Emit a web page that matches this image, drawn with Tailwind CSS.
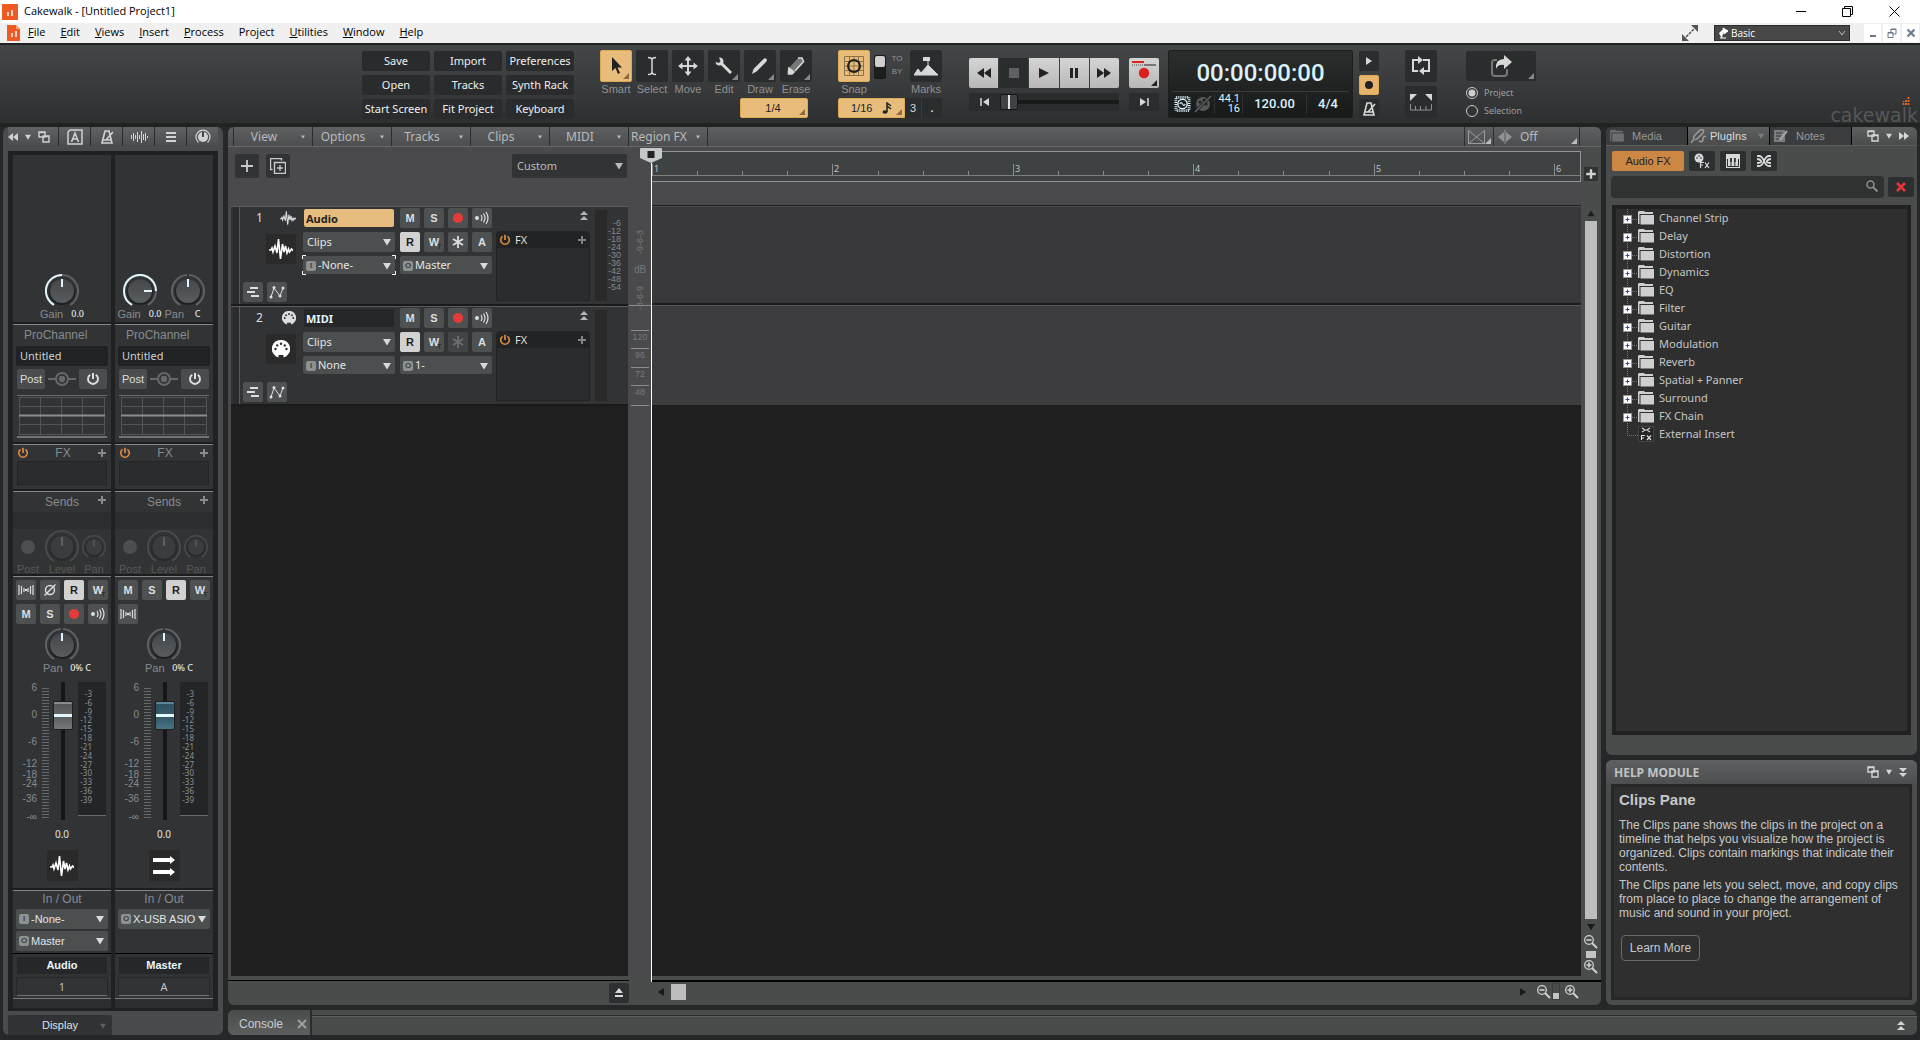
<!DOCTYPE html>
<html lang="en">
<head>
<meta charset="utf-8">
<meta name="viewport" content="width=device-width, initial-scale=1">
<title>Cakewalk - [Untitled Project1]</title>
<script src="https://cdn.jsdelivr.net/npm/@tailwindcss/browser@4"></script>
</head>
<body class="flex h-screen min-h-[1000px] flex-col overflow-x-hidden bg-[#262728] font-['Noto_Sans',sans-serif] text-[11px] text-[#c8cacb]">

<svg class="absolute h-0 w-0" aria-hidden="true">
  <symbol id="i-float" viewBox="0 0 12 12"><path d="M1 1h6v5H1zM5 5h6v6H5z" fill="#4d4f50" stroke="currentColor" stroke-width="1.4"/><path d="M1 1.600h6M5 5.600h6" stroke="currentColor" stroke-width="1.400"/></symbol>
  <symbol id="i-down" viewBox="0 0 8 8"><path d="M0 1h8L4 7.500z" fill="currentColor"/></symbol>
  <symbol id="i-corner" viewBox="0 0 6 6"><path d="M6 0v6H0z" fill="currentColor"/></symbol>
  <symbol id="i-metro" viewBox="0 0 16 16"><path d="M6 2h4l3 12H3zM4 11h8M7 11l7-8" fill="none" stroke="currentColor" stroke-width="1.600"/></symbol>
  <symbol id="i-waves" viewBox="0 0 18 16"><path d="M1.500 6v4M3.500 4v8M5.500 6v4M7.500 3v10M9.500 6v4M11.500 2v12M13.500 5v6M15.500 4v8M17.500 7v2" stroke="currentColor" stroke-width="1"/></symbol>
  <symbol id="i-power" viewBox="0 0 14 14"><path d="M4.200 2.800a5 5 0 1 0 5.600 0" fill="none" stroke="currentColor" stroke-width="1.900"/><path d="M7 1v6" stroke="currentColor" stroke-width="2"/></symbol>
  <symbol id="i-plus" viewBox="0 0 10 10"><path d="M5 1v8M1 5h8" stroke="currentColor" stroke-width="2"/></symbol>
  <symbol id="i-audio" viewBox="0 0 24 24"><path d="M0 13h2l1-2 1 4 2-6 2 7 1.500-14 2 20 2-15 1.500 8 1.500-6 1.500 7 1.500-4 1 3 2-3 2 2" fill="none" stroke="currentColor" stroke-width="1.600"/></symbol>
  <symbol id="i-midi" viewBox="0 0 18 18"><path d="M9 0a8.800 8.800 0 0 0-6 15.500c1 1 2 1.500 3.500 2V15h5v2.500c1.500-.5 2.500-1 3.500-2A8.800 8.800 0 0 0 9 0z" fill="currentColor"/><g fill="#2c2c2c"><circle cx="3.500" cy="9" r="1.200"/><circle cx="5.200" cy="5.400" r="1.200"/><circle cx="9" cy="3.800" r="1.200"/><circle cx="12.800" cy="5.400" r="1.200"/><circle cx="14.500" cy="9" r="1.200"/></g></symbol>
  <symbol id="i-echo" viewBox="0 0 16 16"><circle cx="3" cy="8" r="2" fill="currentColor"/><path d="M7 5q2 3 0 6M9.500 3.500q3 4.500 0 9M12 2q4 6 0 12" fill="none" stroke="currentColor" stroke-width="1.200"/></symbol>
  <symbol id="i-inter" viewBox="0 0 16 12"><path d="M1 1v10M3.500 2v8M6 4v4M10 4v4M12.500 2v8M15 1v10" stroke="currentColor" stroke-width="1.200"/><path d="M7 6h2" stroke="currentColor" stroke-width="2"/></symbol>
  <symbol id="i-phase" viewBox="0 0 14 14"><circle cx="7" cy="7" r="4.500" fill="none" stroke="currentColor" stroke-width="1.400"/><path d="M1.500 12.500l11-11" stroke="currentColor" stroke-width="1.400"/></symbol>
  <symbol id="i-node" viewBox="0 0 28 14"><path d="M0 7h28" stroke="currentColor" stroke-width="2"/><circle cx="14" cy="7" r="6" fill="#323335" stroke="currentColor" stroke-width="2"/><circle cx="14" cy="7" r="3.200" fill="currentColor"/></symbol>
  <symbol id="i-takes" viewBox="0 0 14 12"><path d="M4 2h8M1 6h8M5 10h8" stroke="currentColor" stroke-width="2"/></symbol>
  <symbol id="i-auto" viewBox="0 0 16 14"><path d="M2 12L5 3l6 8 3-8" fill="none" stroke="currentColor" stroke-width="1"/><g fill="currentColor"><circle cx="2" cy="12" r="1.500"/><circle cx="5" cy="2.500" r="1.500"/><circle cx="11" cy="11" r="1.500"/><circle cx="14" cy="3" r="1.500"/></g></symbol>
  <symbol id="i-freeze" viewBox="0 0 12 12"><path d="M6 0v12M1 3l10 6M1 9l10-6" stroke="currentColor" stroke-width="1.800"/></symbol>
  <symbol id="i-upup" viewBox="0 0 8 10"><path d="M4 0l4 4H0zM4 5l4 4H0z" fill="currentColor"/></symbol>
  <symbol id="i-zoomout" viewBox="0 0 14 14"><circle cx="5" cy="5" r="4.300" fill="none" stroke="currentColor" stroke-width="1.300"/><path d="M2.500 5h5" stroke="currentColor" stroke-width="1.600"/><path d="M8 8l5 5" stroke="currentColor" stroke-width="2"/></symbol>
  <symbol id="i-zoomin" viewBox="0 0 14 14"><circle cx="5" cy="5" r="4.300" fill="none" stroke="currentColor" stroke-width="1.300"/><path d="M2.500 5h5M5 2.500v5" stroke="currentColor" stroke-width="1.600"/><path d="M8 8l5 5" stroke="currentColor" stroke-width="2"/></symbol>
  <symbol id="i-folder" viewBox="0 0 16 14"><path d="M0 13V1l1-1h5l1 1h8v2H1.500v10z" fill="currentColor"/><path d="M2.500 4H16v9.500H2.500z" fill="currentColor"/></symbol>
  <linearGradient id="cap" x1="0" y1="0" x2="0" y2="1"><stop offset="0" stop-color="#45484b"/><stop offset="1" stop-color="#595c5f"/></linearGradient>
  <symbol id="k-base" viewBox="0 0 34 34"><path d="M9 30.900A16 16 0 1 1 25 30.900" fill="none" stroke="#5f6264" stroke-width="2"/><circle cx="17" cy="18" r="13" fill="#1e1f20"/><circle cx="17" cy="17" r="12" fill="url(#cap)"/></symbol>
  <symbol id="k-dim" viewBox="0 0 34 34"><path d="M9 30.900A16 16 0 1 1 25 30.900" fill="none" stroke="#484a4c" stroke-width="2"/><circle cx="17" cy="18" r="13" fill="#292a2b"/><circle cx="17" cy="17" r="11.500" fill="#3a3c3e"/><path d="M17 7v9" stroke="#5c5f61" stroke-width="2"/></symbol>
  <symbol id="k-half" viewBox="0 0 34 34"><use href="#k-base"/><path d="M9 30.900A16 16 0 0 1 17 1" fill="none" stroke="#e2f4fb" stroke-width="2"/><path d="M17 5v8" stroke="#e2f4fb" stroke-width="2"/></symbol>
  <symbol id="k-full" viewBox="0 0 34 34"><use href="#k-base"/><path d="M9 30.900A16 16 0 1 1 33 17" fill="none" stroke="#e2f4fb" stroke-width="2"/><path d="M21 17h8" stroke="#e2f4fb" stroke-width="2"/></symbol>
  <symbol id="k-pan" viewBox="0 0 34 34"><use href="#k-base"/><path d="M17 0v3" stroke="#323335" stroke-width="2"/><path d="M17 5v8" stroke="#e2f4fb" stroke-width="2"/></symbol>
</svg>

<!-- title bar -->
<header class="flex h-[23px] shrink-0 items-center bg-white pl-0.5 font-['Open_Sans',sans-serif] text-black">
  <svg class="h-4 w-4" viewBox="0 0 16 16"><path d="M0 0h16v16H0z" fill="#ee5a24"/><path d="M5 12V8h2v4zM9 12V6h2v6z" fill="#fbd2bd"/></svg>
  <h1 class="ml-1.5 text-[11px]">Cakewalk - [Untitled Project1]</h1>
  <div class="ml-auto flex items-center gap-9 pr-5">
    <button aria-label="Minimize"><svg class="h-[11px] w-[11px]" viewBox="0 0 11 11"><path d="M1 5.500h10" stroke="#000"/></svg></button>
    <button aria-label="Restore"><svg class="h-[11px] w-[11px]" viewBox="0 0 11 11"><path d="M.5 2.500h8v8h-8zM2.500 2.500v-2h8v8h-2" fill="none" stroke="#000"/></svg></button>
    <button aria-label="Close"><svg class="h-[11px] w-[11px]" viewBox="0 0 11 11"><path d="M.5.500l10 10M10.500.500l-10 10" stroke="#000"/></svg></button>
  </div>
</header>

<!-- menu bar -->
<nav class="flex h-5 shrink-0 items-center bg-[#f0f0f0] pl-[7px] font-['Open_Sans',sans-serif] text-[11px] text-black">
  <svg class="mr-2 h-4 w-[13px]" viewBox="0 0 13 16"><path d="M0 0h9l4 4v12H0z" fill="#ee5a24"/><path d="M9 0v4h4z" fill="#f9a583"/><path d="M4 12V8h2v4zM8 12V6h2v6z" fill="#fbd2bd"/></svg>
  <div class="flex gap-[15px] pb-0.5">
    <a href="#"><u>F</u>ile</a><a href="#"><u>E</u>dit</a><a href="#"><u>V</u>iews</a><a href="#"><u>I</u>nsert</a><a href="#"><u>P</u>rocess</a><a href="#">Project</a><a href="#"><u>U</u>tilities</a><a href="#"><u>W</u>indow</a><a href="#"><u>H</u>elp</a>
  </div>
  <button aria-label="Expand" class="mr-4 ml-auto"><svg class="h-4 w-4" viewBox="0 0 16 16"><path d="M4 12l8-8" stroke="#555" stroke-width="1.500" stroke-dasharray="3 1"/><path d="M9 0h7v7zM0 9v7h7z" fill="#555"/></svg></button>
  <div class="relative mr-3.5">
    <select aria-label="Workspace" class="block h-4 w-[136px] appearance-none border border-[#2c2c2c] bg-[#474747] pl-4 font-['Open_Sans',sans-serif] text-[10px] leading-3 text-white"><option>Basic</option></select>
    <svg class="pointer-events-none absolute top-0.5 left-1 h-3 w-3" viewBox="0 0 12 12"><path d="M2 11h6M4 11L1.500 6 6 2M5 1l5 3-4 3z" fill="#fff" stroke="#fff"/></svg>
    <svg class="pointer-events-none absolute top-1 right-1 h-2 w-2" viewBox="0 0 8 8"><path d="M1 2l3 4 3-4" fill="none" stroke="#bbb"/></svg>
  </div>
  <div class="flex gap-0.5 pr-px text-[#6a7888]">
    <button aria-label="Minimize document" class="flex h-[18px] w-[17px] items-center justify-center bg-white"><svg class="h-2.5 w-2.5" viewBox="0 0 10 10"><path d="M2 8h6" stroke="currentColor" stroke-width="2"/></svg></button>
    <button aria-label="Restore document" class="flex h-[18px] w-[17px] items-center justify-center bg-white"><svg class="h-2.5 w-2.5" viewBox="0 0 10 10"><path d="M1 4.500h5v5H1zM4 4V1h5v5H6M4 1.500h5M1 5h5" fill="none" stroke="currentColor"/></svg></button>
    <button aria-label="Close document" class="flex h-[18px] w-[17px] items-center justify-center bg-white"><svg class="h-2.5 w-2.5" viewBox="0 0 10 10"><path d="M1.500 1.500l7 7M8.500 1.500l-7 7" stroke="currentColor" stroke-width="2"/></svg></button>
  </div>
</nav>

<!-- control bar -->
<section class="relative flex h-[80px] shrink-0 items-start justify-center border-t-2 border-[#1f2423] bg-linear-to-b from-[#444748] to-[#2e2f30] pt-[5px] pr-[22px]">
  <div class="mt-px grid grid-cols-[68px_68px_68px] gap-1" id="shortcuts"></div>

  <div class="ml-[26px] w-[212px]">
    <div class="flex gap-1 text-center font-['Liberation_Sans',sans-serif] text-[11px] leading-[14px] text-[#8f9192]">
      <div class="w-8"><button aria-label="Smart" class="relative mx-auto flex h-8 w-8 items-center justify-center rounded-xs border border-[#dda956] bg-[#e8bd7c] text-[#222]"><svg class="h-5 w-5" viewBox="0 0 20 20"><path d="M6 1v14l3.500-3 2.500 6 2-1-2.500-5.500H16z" fill="currentColor"/></svg><svg class="absolute right-0.5 bottom-0.5 h-1.5 w-1.5 text-[#8a6d3c]"><use href="#i-corner"/></svg></button>Smart</div>
      <div class="w-8"><button aria-label="Select" class="flex h-8 w-8 items-center justify-center rounded-xs bg-[#2a2d2e] text-[#d8d8d8]"><svg class="h-5 w-5" viewBox="0 0 20 20"><path d="M6 1.500q4 0 4 2.500 0-2.500 4-2.500M10 4v12M6 18.500q4 0 4-2.500 0 2.500 4 2.500" fill="none" stroke="currentColor" stroke-width="1.500"/></svg></button>Select</div>
      <div class="w-8"><button aria-label="Move" class="flex h-8 w-8 items-center justify-center rounded-xs bg-[#2a2d2e] text-[#d8d8d8]"><svg class="h-5 w-5" viewBox="0 0 20 20"><path d="M10 3v14M3 10h14" stroke="currentColor" stroke-width="2"/><path d="M10 0l3.500 4.500h-7zM10 20l3.500-4.500h-7zM0 10l4.500-3.500v7zM20 10l-4.500-3.500v7z" fill="currentColor"/></svg></button>Move</div>
      <div class="w-8"><button aria-label="Edit" class="relative flex h-8 w-8 items-center justify-center rounded-xs bg-[#2a2d2e] text-[#d8d8d8]"><svg class="h-5 w-5" viewBox="0 0 20 20"><path d="M7 7l10 10" stroke="currentColor" stroke-width="3"/><path d="M5 1.500a4 4 0 1 1-3.500 4.500L5 7l1.500-2z" fill="currentColor"/></svg><svg class="absolute right-0.5 bottom-0.5 h-1.5 w-1.5 text-[#888]"><use href="#i-corner"/></svg></button>Edit</div>
      <div class="w-8"><button aria-label="Draw" class="relative flex h-8 w-8 items-center justify-center rounded-xs bg-[#2a2d2e] text-[#d8d8d8]"><svg class="h-5 w-5" viewBox="0 0 20 20"><path d="M2 18l1.500-5L13 3.500q2-2 3.300-.7T16 6L6.500 15.500z" fill="currentColor"/></svg><svg class="absolute right-0.5 bottom-0.5 h-1.5 w-1.5 text-[#888]"><use href="#i-corner"/></svg></button>Draw</div>
      <div class="w-8"><button aria-label="Erase" class="relative flex h-8 w-8 items-center justify-center rounded-xs bg-[#2a2d2e] text-[#d8d8d8]"><svg class="h-5 w-5" viewBox="0 0 20 20"><path d="M3 12L12 2h4l1 3-9 11z" fill="#777"/><path d="M3 12l5 4-2 2H2.500v-3zM12 2h4l1.500 3.500L9 15" fill="none" stroke="currentColor" stroke-width="1.600"/><path d="M3 12l5 4-2 2H2.500z" fill="currentColor"/></svg><svg class="absolute right-0.5 bottom-0.5 h-1.5 w-1.5 text-[#888]"><use href="#i-corner"/></svg></button>Erase</div>
    </div>
    <button class="relative mt-0.5 ml-[140px] block h-5 w-[68px] rounded-xs border border-[#dda956] bg-[#e8bd7c] pr-0.5 font-['Liberation_Sans',sans-serif] text-[11px] text-[#222]">1/4<svg class="absolute right-0.5 bottom-0.5 h-1.5 w-1.5 text-[#8a6d3c]"><use href="#i-corner"/></svg></button>
  </div>

  <div class="ml-[26px] w-[104px] font-['Liberation_Sans',sans-serif]">
    <div class="flex text-center text-[11px] leading-[14px] text-[#8f9192]">
      <div class="w-8"><button aria-label="Snap" class="flex h-8 w-8 items-center justify-center rounded-xs border border-[#dda956] bg-[#e8bd7c] text-[#222]"><svg class="h-[22px] w-[22px]" viewBox="0 0 22 22"><path d="M1.500 1.500h19v19h-19zM6.500 1v20M11 1v20M15.500 1v20M1 6.500h20M1 11h20M1 15.500h20" fill="none" stroke="#8d7244"/><circle cx="11" cy="11" r="6" fill="none" stroke="currentColor" stroke-width="2"/></svg></button>Snap</div>
      <button aria-label="Snap to or by" class="mt-[5px] ml-1 flex h-6 w-3 items-start rounded-xs border border-[#191a1a] bg-[#1c1d1d]"><span class="h-[11px] w-full rounded-xs bg-[#cfcfcf]"></span></button>
      <div class="ml-1 w-[14px] pt-0.5 text-[8px] leading-[13px]">TO<br>BY</div>
      <div class="ml-[6px] w-8"><button aria-label="Marks" class="flex h-8 w-8 items-center justify-center rounded-xs bg-[#2a2d2e] text-[#d8d8d8]"><svg class="h-5 w-6" viewBox="0 0 24 20"><path d="M0 19l4-6 3 4 7-8 10 10zM14 9V2" fill="currentColor" stroke="currentColor"/><path d="M9 1h7v4H9z" fill="currentColor"/></svg></button>Marks</div>
    </div>
    <div class="mt-0.5 flex text-[11px]">
      <button class="relative flex h-5 w-[67px] items-center rounded-l-xs border border-[#dda956] bg-[#e8bd7c] pl-3 text-[#222]">1/16<svg class="ml-2.5 h-3 w-2.5" viewBox="0 0 10 12"><ellipse cx="3" cy="10" rx="2.500" ry="1.800" fill="currentColor"/><path d="M5 10V1l4 3M5 4l4 3" stroke="currentColor" stroke-width="1.500" fill="none"/></svg><svg class="absolute right-0.5 bottom-0.5 h-1.5 w-1.5 text-[#8a6d3c]"><use href="#i-corner"/></svg></button>
      <button class="h-5 w-[17px] border-r border-[#3a3c3d] bg-[#2a2d2e] text-[#d8d8d8]">3</button>
      <button class="h-5 w-5 rounded-r-xs bg-[#2a2d2e] font-bold text-[#d8d8d8]">.</button>
    </div>
  </div>

  <div class="mt-2 ml-[27px] grid grid-cols-[150px_30px] gap-x-2.5 gap-y-[5px]">
    <div class="flex h-[30px] gap-px text-[#222]">
      <button aria-label="Rewind" class="flex flex-1 items-center justify-center rounded-l-xs bg-linear-to-b from-[#d4d4d4] to-[#b8b8b8]"><svg class="h-3 w-4" viewBox="0 0 16 12"><path d="M8 1v10L1 6zM15 1v10L8 6z" fill="currentColor"/></svg></button>
      <button aria-label="Stop" class="flex flex-1 items-center justify-center bg-[#2a2d2e]"><span class="h-2.5 w-2.5 bg-[#5e6061]"></span></button>
      <button aria-label="Play" class="flex flex-1 items-center justify-center bg-linear-to-b from-[#d4d4d4] to-[#b8b8b8]"><svg class="h-3 w-3" viewBox="0 0 12 12"><path d="M1 1v10l10-5z" fill="currentColor"/></svg></button>
      <button aria-label="Pause" class="flex flex-1 items-center justify-center bg-linear-to-b from-[#d4d4d4] to-[#b8b8b8]"><svg class="h-3 w-3" viewBox="0 0 12 12"><path d="M2 1h3v10H2zM7 1h3v10H7z" fill="currentColor"/></svg></button>
      <button aria-label="Fast forward" class="flex flex-1 items-center justify-center rounded-r-xs bg-linear-to-b from-[#d4d4d4] to-[#b8b8b8]"><svg class="h-3 w-4" viewBox="0 0 16 12"><path d="M1 1v10l7-5zM8 1v10l7-5z" fill="currentColor"/></svg></button>
    </div>
    <button aria-label="Record" class="relative rounded-xs bg-linear-to-b from-[#d4d4d4] to-[#b8b8b8]"><svg class="h-[30px] w-[30px]" viewBox="0 0 30 30"><path d="M3 4h12" stroke="#d22" stroke-width="2"/><path d="M3 7h12" stroke="#777" stroke-width="1.500" stroke-dasharray="1 1"/><path d="M15 7h12" stroke="#777" stroke-width="2"/><circle cx="15" cy="15" r="5.200" fill="#dc2020"/></svg><svg class="absolute right-0.5 bottom-0.5 h-1.5 w-1.5 text-[#222]"><use href="#i-corner"/></svg></button>
    <div class="flex h-[18px] items-center rounded-xs bg-[#2a2c2d]">
      <button aria-label="Go to start" class="flex w-[31px] shrink-0 justify-center text-[#d8d8d8]"><svg class="h-2.5 w-2.5" viewBox="0 0 10 10"><path d="M1 1v8" stroke="currentColor" stroke-width="1.500"/><path d="M9 1v8L3 5z" fill="currentColor"/></svg></button>
      <input type="range" aria-label="Song position" value="0" class="h-4 w-[119px] shrink-0 appearance-none bg-[linear-gradient(transparent_6px,#191a1a_6px,#191a1a_10px,transparent_10px)] [&::-webkit-slider-thumb]:h-4 [&::-webkit-slider-thumb]:w-[18px] [&::-webkit-slider-thumb]:appearance-none [&::-webkit-slider-thumb]:rounded-xs [&::-webkit-slider-thumb]:border [&::-webkit-slider-thumb]:border-[#161717] [&::-webkit-slider-thumb]:bg-[linear-gradient(90deg,#404244_7px,#dfe6ea_7px,#dfe6ea_9px,#404244_9px)]">
    </div>
    <button aria-label="Go to end" class="flex h-[18px] items-center justify-center rounded-xs bg-[#2a2d2e] text-[#d8d8d8]"><svg class="h-2.5 w-2.5" viewBox="0 0 10 10"><path d="M9 1v8" stroke="currentColor" stroke-width="1.500"/><path d="M1 1v8l6-4z" fill="currentColor"/></svg></button>
  </div>

  <div class="ml-[9px] h-[68px] w-[185px] rounded-xs border border-[#1c1d1d] bg-linear-to-b from-[#2c2d2d] to-[#181919] px-[3px] font-['Roboto',sans-serif] text-[#d9f2fb]">
    <div class="flex h-[41px] items-center justify-center border-b border-[#3a3b3b] pt-1 text-[24px] leading-6 font-medium">00:00:00:00</div>
    <div class="flex h-[24px] items-center text-[12px] leading-[10px] font-medium">
      <svg class="ml-0.5 h-[18px] w-[17px]" viewBox="0 0 18 18"><path d="M2 2h14v14H2z" fill="#1c1d1d" stroke="#d9f2fb" stroke-width="3" stroke-dasharray="1 1"/><circle cx="9" cy="9" r="5" fill="none" stroke="#d9f2fb" stroke-width="1.500"/><path d="M6 9q1.500-3 3 0t3 0" fill="none" stroke="#d9f2fb" stroke-width="1.200"/></svg>
      <svg class="ml-[3px] h-[18px] w-[18px]" viewBox="0 0 18 18"><circle cx="9" cy="9" r="7" fill="#55595a"/><g fill="#222"><circle cx="6" cy="7" r="1.500"/><circle cx="10" cy="5" r="1.500"/><circle cx="12" cy="9" r="1.500"/></g><path d="M1 17L17 1" stroke="#1c1d1d" stroke-width="3"/><path d="M1 17L17 1" stroke="#66696a" stroke-width="1.200"/></svg>
      <span class="ml-0.5 flex h-5 w-[29px] items-center justify-end border-x border-[#303131] pr-0.5 text-right text-[11px] font-normal">44.1<br>16</span>
      <span class="flex h-5 w-16 items-center justify-center border-r border-[#303131] text-[13px]">120.00</span>
      <span class="flex-1 text-center text-[13px]">4/4</span>
    </div>
  </div>

  <div class="mt-px ml-[6px] flex w-5 flex-col gap-1">
    <button aria-label="Play options" class="flex h-5 items-center justify-center rounded-xs bg-[#2a2d2e] text-[#d8d8d8]"><svg class="h-2.5 w-2" viewBox="0 0 8 10"><path d="M1 1v8l6-4z" fill="currentColor"/></svg></button>
    <button aria-label="Audio recording" class="flex h-5 items-center justify-center rounded-xs border border-[#dda956] bg-[#e8b56c]"><span class="h-2 w-2 rounded-full bg-[#222]"></span></button>
    <button aria-label="Metronome" class="flex h-5 items-center justify-center rounded-xs bg-[#2a2d2e] text-[#d8d8d8]"><svg class="h-4 w-4"><use href="#i-metro"/></svg></button>
  </div>

  <div class="ml-[26px] flex w-8 flex-col gap-1">
    <button aria-label="Loop" class="flex h-8 items-center justify-center rounded-xs bg-[#2a2d2e] text-[#d8d8d8]"><svg class="h-5 w-5" viewBox="0 0 20 20"><path d="M8 4H2v11h5M12 4h6v11h-6" fill="none" stroke="currentColor" stroke-width="2"/><path d="M7 0l5 4-5 4zM13 11l-5 4 5 4z" fill="currentColor"/></svg></button>
    <button aria-label="Punch" class="flex h-8 items-center justify-center rounded-xs bg-[#2a2d2e] text-[#d8d8d8]"><svg class="h-5 w-6" viewBox="0 0 24 20"><path d="M1 2h7L1 9zM23 2h-7l7 7z" fill="currentColor"/><path d="M1.500 12v6h21v-6M6.500 14v4M11.500 14v4M17 14v4" fill="none" stroke="#8d8f90"/></svg></button>
  </div>

  <div class="mt-px ml-[29px] w-[70px] text-[#a4a6a7]">
    <button aria-label="Export" class="relative flex h-[30px] w-full items-center justify-center rounded-xs bg-[#2a2d2e] text-[#d8d8d8]"><svg class="h-[22px] w-[22px]" viewBox="0 0 22 22"><path d="M7 5H5Q2 5 2 8v10q0 3 3 3h9q3 0 3-3v-4" fill="none" stroke="#777" stroke-width="2"/><path d="M14 0l8 7-8 7v-4q-6-1-8 4-1-10 8-10z" fill="currentColor"/></svg><svg class="absolute right-0.5 bottom-0.5 h-1.5 w-1.5 text-[#888]"><use href="#i-corner"/></svg></button>
    <label class="mt-[3px] flex h-[18px] items-center gap-1.5 font-['Open_Sans',sans-serif] text-[9px]"><input type="radio" name="export" checked class="h-3 w-3 appearance-none rounded-full border border-[#c8caca] checked:bg-[radial-gradient(circle,#d0d0d0_3px,transparent_4px)]">Project</label>
    <label class="flex h-[18px] items-center gap-1.5 font-['Open_Sans',sans-serif] text-[9px]"><input type="radio" name="export" class="h-3 w-3 appearance-none rounded-full border border-[#c8caca]">Selection</label>
  </div>
  <div class="absolute right-0.5 bottom-0 font-['DejaVu_Sans',sans-serif] text-[19px] leading-4 text-[#55585a]">
    <svg class="absolute -top-2.5 right-2 h-2 w-2" viewBox="0 0 8 8"><path d="M1.500 8V4M4 8V2M6.500 8V0" stroke="#e06a24" stroke-width="1.800" stroke-dasharray="2 1"/></svg>cakewalk
  </div>
</section>

<!-- workspace -->
<main class="flex min-h-0 flex-1 gap-[5px] border-t-4 border-[#212222] pr-[3px] pb-[5px] pl-[3px]">

  <!-- inspector -->
  <aside class="flex w-[220px] shrink-0 flex-col rounded-md bg-[#494b4c] px-[5px]">
    <div class="flex h-[19px] gap-px bg-[#2a2b2c] text-[#d0d3d4] [&>*]:bg-linear-to-b [&>*]:from-[#606263] [&>*]:to-[#4a4c4d]">
      <div class="flex w-[50px] items-center gap-1.5"><button aria-label="Collapse"><svg class="block h-2 w-2.5" viewBox="0 0 10 8"><path d="M5 0v8L0 4zM10 0v8L5 4z" fill="currentColor"/></svg></button><svg class="h-1.5 w-2"><use href="#i-down"/></svg><svg class="h-3 w-3"><use href="#i-float"/></svg></div>
      <button aria-label="Track" class="flex flex-1 items-center justify-center"><svg class="h-4 w-4" viewBox="0 0 16 16"><path d="M3 1h12v14H1V3zM4.500 13L8 4l3.500 9M5.500 10h5" fill="none" stroke="currentColor" stroke-width="1.500"/></svg></button>
      <button aria-label="Clip" class="flex flex-1 items-center justify-center"><svg class="h-4 w-4"><use href="#i-metro"/></svg></button>
      <button aria-label="Waveform" class="flex flex-1 items-center justify-center"><svg class="h-4 w-[18px]"><use href="#i-waves"/></svg></button>
      <button aria-label="List" class="flex flex-1 items-center justify-center"><svg class="h-3 w-2.5" viewBox="0 0 10 12"><path d="M0 2h10M0 6h10M0 10h10" stroke="currentColor" stroke-width="2"/></svg></button>
      <button aria-label="ProChannel" class="flex flex-1 items-center justify-center"><svg class="h-4 w-4" viewBox="0 0 16 16"><circle cx="8" cy="8" r="5" fill="currentColor"/><path d="M3.500 13.500a7 7 0 1 1 9 0" fill="none" stroke="currentColor" stroke-width="1.200"/><path d="M8 3v5" stroke="#444" stroke-width="2"/></svg></button>
    </div>
    <div id="strips" class="mt-[5px] flex flex-1 gap-1 border-x-4 border-t-4 border-b-[3px] border-[#202122] bg-[#202122] px-px"></div>
    <div class="flex h-6 items-end pt-1"><button class="relative h-5 w-[104px] rounded-t-xs bg-[#303233] font-['Liberation_Sans',sans-serif] text-[11px] text-[#dde1e3]">Display<svg class="absolute top-2 right-1.5 h-1.5 w-1.5 text-[#5c5e5f]"><use href="#i-down"/></svg></button></div>
  </aside>

  <div class="flex min-w-0 flex-1 flex-col gap-[5px]">
    <div class="flex min-h-0 flex-1 gap-[5px]">

      <!-- track view -->
      <section class="flex min-w-0 flex-1 flex-col rounded-md bg-[#4a4c4b]">
        <div class="flex h-5 shrink-0 items-center rounded-t-md border-b border-[#666869] bg-linear-to-b from-[#5e6061] to-[#4c4e4f] pl-[5px]">
          <div id="viewMenus" class="flex h-[19px] border-l border-[#2c2d2e]"></div>
          <div class="mr-[21px] ml-auto flex h-[19px] border-x border-[#2c2d2e] text-[#b9bbbc]">
            <button aria-label="Crossfade" class="relative flex w-[29px] items-center border-r border-[#2c2d2e] pl-[3px]"><svg class="h-3.5 w-[17px]" viewBox="0 0 17 14"><path d="M.5.500v13h16V.5L.5 13.500M.5.500l16 13" fill="none" stroke="#9a9c9d"/></svg><svg class="absolute right-0.5 bottom-0.5 h-1.5 w-1.5"><use href="#i-corner"/></svg></button>
            <button class="relative flex w-[85px] items-center gap-2 pl-1 text-[12px] leading-4"><svg class="h-3.5 w-3.5 text-[#909394]" viewBox="0 0 14 14"><path d="M6 2v10L0 7zM8 2v10l6-5zM6.500 0h1v14h-1z" fill="currentColor"/></svg>Off<svg class="absolute right-0.5 bottom-0.5 h-1.5 w-1.5"><use href="#i-corner"/></svg></button>
          </div>
        </div>

        <div class="flex min-h-0 flex-1">
          <div class="flex w-[401px] shrink-0 flex-col bg-[#4a4a4c] pl-[3px]">
            <div class="flex h-[59px] shrink-0 items-start pt-[7px] pl-1">
              <button aria-label="Add track" class="flex h-6 w-6 items-center justify-center rounded-xs bg-[#313334] text-[#c9cbcc]"><svg class="h-3 w-3" viewBox="0 0 12 12"><path d="M6 0v12M0 6h12" stroke="currentColor" stroke-width="1.800"/></svg></button>
              <button aria-label="Duplicate track" class="ml-[7px] flex h-6 w-6 items-center justify-center rounded-xs bg-[#313334] text-[#c9cbcc]"><svg class="h-4 w-4" viewBox="0 0 16 16"><path d="M4.500 4.500h11v11h-11zM2.500 11.500h-2V.5h11v2M10 7v6M7 10h6" fill="none" stroke="currentColor" stroke-width="1.400"/></svg></button>
              <div class="relative mr-[2px] ml-auto"><select aria-label="Track control preset" class="block h-6 w-[115px] appearance-none rounded-xs bg-[#313334] pl-[5px] text-[#b9bbbc]"><option>Custom</option></select><svg class="pointer-events-none absolute top-2 right-1 h-2 w-2 text-[#b9bbbc]"><use href="#i-down"/></svg></div>
            </div>
            <div id="tracks" class="mr-px flex-1 bg-[#1f1f1f]"></div>
          </div>

          <div class="w-[22px] shrink-0 bg-[#4a4a4c] pt-[59px] text-center font-['Liberation_Sans',sans-serif] text-[9px] leading-3 text-[#77797a]">
            <div class="flex h-[100px] flex-col items-center border-b border-[#8a8c8d] pt-6 leading-[8px]">
              <span class="-rotate-90">-3</span><span class="-rotate-90">-6</span><span class="-rotate-90">-9</span>
              <span class="my-3 text-[10px]">dB</span>
              <span class="-rotate-90">-9</span><span class="-rotate-90">-6</span><span class="-rotate-90">-3</span>
            </div>
            <div class="mx-0.5 mt-[24px] border-t border-[#8a8c8d]">
              <div class="h-[18px] border-b border-[#8a8c8d]">120</div><div class="h-[19px] border-b border-[#8a8c8d]">96</div><div class="h-[18px] border-b border-[#8a8c8d]">72</div><div class="h-[20px] border-b border-[#8a8c8d]">48</div>
            </div>
          </div>

          <div class="relative flex min-w-0 flex-1 flex-col bg-[#4a4a4c] pt-1">
            <div class="h-[31px] shrink-0 border border-l-0 border-[#939594] bg-[#3f4242]">
              <div id="ruler" class="relative h-6 border-b border-[#7c7f7e] text-[9px] text-[#c0c2c3]"></div>
            </div>
            <div class="h-[24px] shrink-0 border-b border-[#1f1f1f]"></div>
            <div class="h-[99px] shrink-0 border-t border-b-2 border-t-[#4c4c4e] border-b-[#1c1c1c] bg-[#38383a]"></div>
            <div class="h-[100px] shrink-0 border-t border-[#555557] bg-[#3d3d3f]"></div>
            <div class="flex-1 bg-[#1f1f1f]"></div>
            <div class="pointer-events-none absolute top-4 -bottom-1.5 left-0 w-px bg-white"></div>
            <svg class="pointer-events-none absolute top-px -left-3 h-[15px] w-6" viewBox="0 0 24 15"><path d="M1 1q0-1 1-1h20q1 0 1 1v9l-11 5L1 10z" fill="#c3c8ca"/><path d="M8.500 3h7v7h-7z" fill="#222"/></svg>
          </div>

          <div class="flex w-5 shrink-0 flex-col items-center bg-[#4a4c4b] pb-0.5 text-[#cfd1d1]">
            <button aria-label="Add" class="mt-5 flex h-3.5 w-3.5 shrink-0 items-center justify-center bg-[#2f3132]"><svg class="h-3 w-3"><use href="#i-plus"/></svg></button>
            <svg class="mt-[29px] h-[7px] w-2 shrink-0 rotate-180 text-[#1c1c1c]"><use href="#i-down"/></svg>
            <div class="mt-1 w-3 flex-1 bg-[#bdbdbd]"></div>
            <svg class="my-1 h-2 w-2 shrink-0 text-[#1c1c1c]"><use href="#i-down"/></svg>
            <button aria-label="Zoom out tracks"><svg class="block h-3.5 w-3.5"><use href="#i-zoomout"/></svg></button>
            <span class="my-0.5 h-[7px] w-2.5 bg-[#c4c4c4]"></span>
            <button aria-label="Zoom in tracks"><svg class="block h-3.5 w-3.5"><use href="#i-zoomin"/></svg></button>
          </div>
        </div>

        <div class="flex h-[29px] shrink-0 pt-1">
          <div class="flex w-[401px] shrink-0 items-start justify-end border-t border-black pt-0.5"><button aria-label="Show bus pane" class="flex h-5 w-5 items-center justify-center rounded-xs bg-[#2d2f30] text-[#d8d8d8]"><svg class="h-2.5 w-2.5" viewBox="0 0 10 10"><path d="M5 0l4 5H1zM1 7h8v2H1z" fill="currentColor"/></svg></button></div>
          <div class="ml-[23px] flex min-w-0 flex-1 items-center border-t-2 border-black pr-[22px] pb-1 pl-[5px]">
            <svg class="h-2 w-2 rotate-90 text-[#1c1c1c]"><use href="#i-down"/></svg>
            <div class="ml-1.5 h-4 w-[15px] bg-[#bdbdbd]"></div>
            <svg class="ml-auto h-2 w-2 -rotate-90 text-[#1c1c1c]"><use href="#i-down"/></svg>
            <button aria-label="Zoom out time" class="ml-2.5 text-[#cfd1d1]"><svg class="block h-3.5 w-3.5"><use href="#i-zoomout"/></svg></button>
            <div class="ml-px flex h-[17px] w-2 flex-col justify-end border border-[#3c3d3d]"><span class="h-1.5 bg-[#c4c4c4]"></span></div>
            <button aria-label="Zoom in time" class="ml-[5px] text-[#cfd1d1]"><svg class="block h-3.5 w-3.5"><use href="#i-zoomin"/></svg></button>
          </div>
        </div>
      </section>

      <!-- browser and help -->
      <aside class="flex w-[311px] shrink-0 flex-col gap-[5px]">
        <section class="flex min-h-0 flex-1 flex-col rounded-md bg-[#4a4c4b] pb-5">
          <div class="flex h-[19px] shrink-0 border-b border-[#5c5e5e] font-['Liberation_Sans',sans-serif] text-[11px] text-[#97999a]">
            <button class="flex w-[82px] items-center gap-2 rounded-tl-md border-r border-black bg-[#3a3c3d] pl-1"><svg class="h-3 w-3.5 text-[#6c6f70]"><use href="#i-folder"/></svg>Media</button>
            <button class="flex w-[82px] items-center gap-1 border-r border-black bg-linear-to-b from-[#5e6061] to-[#4a4c4b] pl-0.5 text-[#d8dadb]"><svg class="h-3.5 w-4 text-[#9a9c9d]" viewBox="0 0 16 14"><path d="M1 14l3-4q-1-2 1-4l5-5q2-1 3 0t0 3L8 9q-2 2-3 1.500M9 12q4 2 4-2t3-2" fill="none" stroke="currentColor" stroke-width="1.500"/></svg>PlugIns<svg class="mr-1 ml-auto h-1.5 w-2 text-[#7b7d7e]"><use href="#i-down"/></svg></button>
            <button class="flex w-[82px] items-center gap-2 border-r border-black bg-[#3a3c3d] pl-1"><svg class="h-3.5 w-3.5 text-[#7b7d7e]" viewBox="0 0 14 14"><path d="M0 1h11v12H0z" fill="currentColor"/><path d="M2 4h6M2 7h5M2 10h3" stroke="#333"/><path d="M6 11l7-9" stroke="#aaa" stroke-width="2"/></svg>Notes</button>
            <div class="flex flex-1 items-center justify-end gap-1.5 rounded-tr-md bg-linear-to-b from-[#5e6061] to-[#4a4c4b] pr-2 text-[#d4d6d7]"><svg class="h-3 w-3"><use href="#i-float"/></svg><svg class="h-1.5 w-2"><use href="#i-down"/></svg><svg class="h-2 w-2.5" viewBox="0 0 10 8"><path d="M0 0v8l5-4zM5 0v8l5-4z" fill="currentColor"/></svg></div>
          </div>
          <div class="mt-[5px] flex gap-[5px] pl-1.5">
            <button class="h-5 w-[72px] rounded-xs bg-[#cd8745] font-['Liberation_Sans',sans-serif] text-[11px] text-[#202020]">Audio FX</button>
            <button aria-label="MIDI FX" class="flex h-5 w-[26px] items-center justify-center rounded-xs bg-[#2c2f30] text-[#d8d8d8]"><svg class="h-4 w-4" viewBox="0 0 16 16"><circle cx="5" cy="5" r="4.500" fill="currentColor"/><g fill="#2c2f30"><circle cx="3" cy="5" r=".8"/><circle cx="5" cy="3" r=".8"/><circle cx="7" cy="5" r=".8"/></g><path d="M6.500 15V9.500H10M6.500 12H9M11 9.500l4 5.500M15 9.500L11 15" fill="none" stroke="currentColor" stroke-width="1.200"/></svg></button>
            <button aria-label="Instruments" class="flex h-5 w-[26px] items-center justify-center rounded-xs bg-[#2c2f30] text-[#d8d8d8]"><svg class="h-3.5 w-3.5" viewBox="0 0 14 14"><path d="M0 0h14v14H0z" fill="currentColor"/><path d="M1.500 5v7.500h11V5M5 4v8M8.800 4v8" fill="none" stroke="#2c2f30"/><path d="M4.200 4h1.700v4H4.200zM8 4h1.700v4H8z" fill="#2c2f30"/></svg></button>
            <button aria-label="ReWire" class="flex h-5 w-[26px] items-center justify-center rounded-xs bg-[#2c2f30] text-[#d8d8d8]"><svg class="h-3.5 w-4" viewBox="0 0 16 14"><path d="M1 2h2q3 0 5 5t5 5h2M1 12h2q3 0 5-5t5-5h2M1 5q3 0 4 2t-4 2M15 5q-3 0-4 2t4 2" fill="none" stroke="currentColor" stroke-width="1.800"/></svg></button>
          </div>
          <div class="mt-[5px] flex items-center gap-1 pl-[5px]">
            <div class="relative"><input type="search" aria-label="Search plug-ins" class="block h-[22px] w-[273px] rounded-sm bg-[#303131] px-2 text-[#ddd]"><svg class="pointer-events-none absolute top-1 right-1.5 h-3 w-3 text-[#8a8c8d]" viewBox="0 0 12 12"><circle cx="4.500" cy="4.500" r="3.500" fill="none" stroke="currentColor" stroke-width="1.600"/><path d="M7 7l4.500 4.500" stroke="currentColor" stroke-width="2"/></svg></div>
            <button aria-label="Clear search" class="flex h-5 w-[26px] items-center justify-center rounded-xs bg-[#2c2f30]"><svg class="h-2.5 w-2.5" viewBox="0 0 10 10"><path d="M1 1l8 8M9 1L1 9" stroke="#e8343a" stroke-width="2.600"/></svg></button>
          </div>
          <ul id="tree" class="mx-1.5 mt-[7px] flex-1 border-4 border-[#212121] bg-[#2f2f2f] text-[#c4c5c6]"></ul>
        </section>

        <section class="flex h-[245px] shrink-0 flex-col rounded-md bg-[#4a4c4b] px-[5px] pb-[5px] font-['Liberation_Sans',sans-serif] text-[12px] text-[#c6c8c9]">
          <div class="-mx-[5px] flex h-6 items-center gap-1.5 rounded-t-md bg-linear-to-b from-[#5e6061] to-[#4c4e4f] pr-2.5 pl-2 font-['Noto_Sans',sans-serif] text-[#d4d6d7]">
            <h2 class="mr-auto pt-0.5 text-[12px] font-bold text-[#c0c3c4]">HELP MODULE</h2><svg class="h-3 w-3"><use href="#i-float"/></svg><svg class="h-1.5 w-2"><use href="#i-down"/></svg><svg class="h-2.5 w-2 rotate-180"><use href="#i-upup"/></svg>
          </div>
          <div class="flex-1 border-[3px] border-[#262626] bg-[#2f2f2f] px-[5px] pt-[3px]">
            <h3 class="text-[15px] leading-5 font-bold">Clips Pane</h3>
            <p class="mt-2 leading-[14px]">The Clips pane shows the clips in the project on a timeline that helps you visualize how the project is organized. Clips contain markings that indicate their contents.</p>
            <p class="mt-1 leading-[14px]">The Clips pane lets you select, move, and copy clips from place to place to change the arrangement of music and sound in your project.</p>
            <button class="mt-[15px] ml-0.5 h-[26px] w-[79px] rounded-sm border border-[#6a6a6a]">Learn More</button>
          </div>
        </section>
      </aside>
    </div>

    <!-- multidock -->
    <div class="flex h-[25px] shrink-0 rounded-md bg-[#4a4c4b]">
      <div class="flex w-[84px] items-center justify-between rounded-l-md border-r-2 border-[#2a2b2b] bg-linear-to-b from-[#4a4c4b] to-[#5c5e5f] pt-0.5 pr-[3px] pl-[11px] font-['Liberation_Sans',sans-serif] text-[12px] text-[#c6cdd2]">Console<button aria-label="Close console" class="text-[#9da0a1]"><svg class="h-2.5 w-2.5" viewBox="0 0 10 10"><path d="M1 1l8 8M9 1L1 9" stroke="currentColor" stroke-width="2"/></svg></button></div>
      <div class="mt-[5px] flex flex-1 items-center justify-end border-t border-[#2a2b2b] pr-3 shadow-[inset_0_1px_#5e6060]"><button aria-label="Expand dock" class="text-[#d4d6d7]"><svg class="block h-2.5 w-2"><use href="#i-upup"/></svg></button></div>
    </div>
  </div>
</main>

<script>
const el = id => document.getElementById(id);
const icon = (name, cls) => `<svg class="${cls}"><use href="#${name}"/></svg>`;

el('shortcuts').innerHTML = ['Save', 'Import', 'Preferences', 'Open', 'Tracks', 'Synth Rack', 'Start Screen', 'Fit Project', 'Keyboard']
  .map(t => `<button class="h-5 rounded-xs bg-[#292b2c] text-[11px] whitespace-nowrap text-[#eef0f0]">${t}</button>`).join('');

el('viewMenus').innerHTML = ['View', 'Options', 'Tracks', 'Clips', 'MIDI', 'Region FX']
  .map(t => `<button class="relative w-[79px] border-r border-[#2c2d2e] pr-[18px] text-[12px] leading-4 whitespace-nowrap text-[#b9bbbc]">${t}${icon('i-down', 'absolute top-2 right-1.5 h-1 w-1.5')}</button>`).join('');

// square button used in strips and track headers
const btn = (label, inner, cls = 'bg-[#4e5152] text-[#dcdedf]') =>
  `<button aria-label="${label}" class="relative flex h-5 w-5 items-center justify-center rounded-xs font-['Liberation_Sans',sans-serif] text-[11px] font-bold ${cls}">${inner}</button>`;
const B = {
  M: btn('Mute', 'M'), S: btn('Solo', 'S'), A: btn('Archive', 'A'),
  R: btn('Read automation', 'R', 'bg-[#d2d2d2] text-[#222]'),
  W: btn('Write automation', 'W<span class="absolute right-0.5 bottom-px text-[8px] leading-[8px] font-normal text-[#222]">T</span>'),
  rec: btn('Arm', '<span class="h-2.5 w-2.5 rounded-full bg-[#e73a3a]"></span>'),
  echo: btn('Input echo', icon('i-echo', 'h-4 w-4')),
  inter: btn('Interleave', icon('i-inter', 'h-3 w-4')),
  phase: btn('Phase', icon('i-phase', 'h-3.5 w-3.5')),
};
const badge = b => b ? `<span class="pointer-events-none absolute top-[5px] left-[3px] flex h-2.5 w-2.5 items-center justify-center rounded-xs bg-[#8e9192] font-['Liberation_Sans',sans-serif] text-[8px] font-bold text-[#3c3f40]">${b}</span>` : '';
const sel = (label, b, text, h = 'h-5') =>
  `<div class="relative w-[92px]"><select aria-label="${label}" class="block w-full appearance-none rounded-xs bg-[#4c4f50] text-[11px] leading-4 text-[#e2e4e5] ${h} ${b ? 'pl-[15px]' : 'pl-1'}"><option>${text}</option></select>${badge(b)}${icon('i-down', 'pointer-events-none absolute top-[6px] right-1 h-2 w-2 text-[#d8dadb]')}</div>`;

const dB = [['6', 6], ['0', 33], ['-6', 60], ['-12', 82], ['-18', 93], ['-24', 102], ['-36', 117], ['-∞', 135]];
const meter = ['-3', '-6', '-9', '-12', '-15', '-18', '-21', '-24', '-27', '-30', '-33', '-36', '-39'];
const head = 'border-t border-[#85888a] shadow-[0_-2px_#1c1d1e]';
const value = t => `<b class="font-['Noto_Sans',sans-serif] text-[9px] font-medium whitespace-nowrap text-[#dfe5e8]">${t}</b>`;

const strip = s => `
<section class="flex w-[98px] flex-col bg-[#323335] font-['Liberation_Sans',sans-serif] text-[11px] text-[#858c8e]" aria-label="${s.name}">
  <div class="flex h-[169px] items-end justify-center pb-1 ${s.bus ? 'gap-[9px] pr-1.5' : ''}">
    <div class="w-11">${icon(s.bus ? 'k-full' : 'k-half', 'mx-auto h-[34px] w-[34px]')}<div class="flex justify-between leading-3">Gain${value('0.0')}</div></div>
    ${s.bus ? `<div class="w-[34px]">${icon('k-pan', 'h-[34px] w-[34px]')}<div class="-ml-1.5 flex justify-between pr-1 leading-3">Pan${value('C')}</div></div>` : ''}
  </div>
  <div class="h-[118px] px-1 ${head}">
    <h4 class="h-[21px] pl-[7px] text-[12px] leading-5">ProChannel</h4>
    <div class="-mx-px h-5 rounded-xs bg-[#202223] px-1 font-['Noto_Sans',sans-serif] text-[11px] leading-5 text-[#cdd0d2]">Untitled</div>
    <div class="mt-[3px] flex items-center justify-between">
      <button class="h-5 w-7 rounded-xs bg-[#4a4d4e] text-[11px] text-[#dcdedf]">Post</button>${icon('i-node', 'h-3.5 w-7 text-[#66696a]')}<button aria-label="ProChannel power" class="flex h-5 w-7 items-center justify-center rounded-xs bg-[#4a4d4e] text-[#dcdedf]">${icon('i-power', 'h-3.5 w-3.5')}</button>
    </div>
    <svg class="mt-1.5 h-[43px] w-[90px]" viewBox="0 0 90 43"><path d="M0 .5h90" stroke="#6a6d6e"/><path d="M2.500 2v38M23.500 2v38M44.500 2v38M65.500 2v38M87.500 2v38M2 11.500h86M2 29.500h86M2 2.500h86M2 39.500h86" stroke="#525456"/><path d="M2 20.500h86" stroke="#8a8d8e" stroke-width="2"/><path d="M0 42h90" stroke="#b0b3b4"/></svg>
  </div>
  <div class="mt-0.5 h-[43px] px-1 ${head}">
    <div class="flex h-4 items-center justify-between text-[12px]"><span class="text-[#d98b45]">${icon('i-power', 'h-3 w-3')}</span>FX${icon('i-plus', 'h-2.5 w-2.5')}</div>
    <div class="h-6 border border-[#232425] bg-[#2b2c2d]"></div>
  </div>
  <div class="mt-1 h-[82px] ${head}">
    <div class="relative h-[21px] border-b border-[#2a2b2c] text-center text-[12px] leading-5">Sends${icon('i-plus', 'absolute top-[3px] right-1 h-2.5 w-2.5')}</div>
    <div class="h-4 bg-[#2c2d2e]"></div>
    <div class="grid grid-cols-[30px_38px_26px] pt-px text-center leading-[11px] text-[#54595a]">
      <div><span class="mx-auto mt-2.5 mb-2.5 block h-3.5 w-3.5 rounded-full bg-[#4c4e50]"></span>Post</div>
      <div>${icon('k-dim', 'mx-auto h-[34px] w-[34px]')}Level</div>
      <div>${icon('k-dim', 'mx-auto mt-[5px] mb-[5px] h-6 w-6')}Pan</div>
    </div>
  </div>
  <div class="mt-[3px] h-[310px] ${head}">
    <div class="grid h-12 grid-cols-[repeat(4,20px)] content-start gap-1 px-[3px] pt-[3px]">${s.buttons.join('')}</div>
    <div class="ml-[30px] w-[50px]">${icon('k-pan', 'mt-[3px] ml-0.5 h-[34px] w-[34px]')}<div class="flex justify-between pr-0.5 leading-3">Pan${value('0% C')}</div></div>
    <div class="mt-2 flex h-[138px] text-[10px] leading-3">
      <div class="relative w-6">${dB.map(([t, y]) => `<span class="absolute right-0" style="top:${y - 6}px">${t}</span>`).join('')}</div>
      <div class="relative mt-1.5 ml-[5px] h-[130px] w-[7px] bg-[repeating-linear-gradient(#66696a_0_1px,transparent_1px_3px)]"></div>
      <input type="range" aria-label="${s.name} volume" value="83" class="ml-1 h-[138px] w-5 appearance-none bg-[linear-gradient(90deg,transparent_8px,#151616_8px,#151616_12px,transparent_12px)] [direction:rtl] [writing-mode:vertical-lr] [&::-webkit-slider-thumb]:h-[29px] [&::-webkit-slider-thumb]:w-5 [&::-webkit-slider-thumb]:appearance-none [&::-webkit-slider-thumb]:rounded-xs [&::-webkit-slider-thumb]:border [&::-webkit-slider-thumb]:border-[#1d1e1e] ${s.bus
        ? '[&::-webkit-slider-thumb]:bg-[linear-gradient(#5a8798_2px,#2f5160_2px,#37596a_12px,#e2f7fd_12px,#e2f7fd_15px,#33586a_15px,#4a7484)]'
        : '[&::-webkit-slider-thumb]:bg-[linear-gradient(#8a8d8e_2px,#55585a_2px,#606364_12px,#e2f7fd_12px,#e2f7fd_15px,#5c5f60_15px,#757879)]'}">
      <div class="ml-[5px] h-[134px] w-7 border-b border-[#6a6d6e] bg-[#242526] pt-2 pr-3.5 text-right font-['Noto_Sans',sans-serif] text-[8px] text-[#8a9092]"><div class="flex h-[114px] flex-col items-end justify-between [&>*]:leading-[8px]">${meter.map(m => `<span>${m}</span>`).join('')}</div></div>
    </div>
    <div class="mt-1.5 text-center font-['Noto_Sans',sans-serif] text-[10px] leading-4 text-[#dfe5e8]">0.0</div>
    <div class="mx-auto mt-2 flex h-[31px] w-[31px] items-center justify-center bg-[#2a2a2a] text-white">${s.bus
      ? '<svg class="h-5 w-[22px]" viewBox="0 0 22 20"><path d="M0 4h18M0 16h18" stroke="currentColor" stroke-width="4"/><path d="M17 0l5 4-5 4zM17 12l5 4-5 4z" fill="currentColor"/></svg>'
      : icon('i-audio', 'h-6 w-6')}</div>
  </div>
  <div class="mt-1 flex h-[64px] flex-col items-center gap-0.5 border-b border-b-black ${head}">
    <h4 class="text-[12px] leading-4">In / Out</h4>${s.io}
  </div>
  <div class="px-1 pt-[3px] text-center">
    <div class="h-[17px] bg-[#262728] text-[11px] leading-[17px] font-bold text-[#e6f6fb]">${s.name}</div>
    <div class="-mx-px mt-[3px] h-[19px] rounded-xs border border-[#262728] border-b-[#707374] font-['Noto_Sans',sans-serif] text-[11px] leading-[17px] text-[#bfc3c5]">${s.num}</div>
  </div>
  <div class="mt-0.5 flex-1 border-t border-[#77797a] bg-[#2c2d2e]"></div>
</section>`;

el('strips').innerHTML =
  strip({ name: 'Audio', num: '1', buttons: [B.inter, B.phase, B.R, B.W, B.M, B.S, B.rec, B.echo], io: sel('Input', 'I', '-None-') + sel('Output', 'O', 'Master') }) +
  strip({ name: 'Master', num: 'A', bus: true, buttons: [B.M, B.S, B.R, B.W, B.inter], io: sel('Output', 'O', 'X-USB ASIO') });

const track = t => `
<article class="flex h-[100px] border-t border-b-2 border-t-[#5a5b5c] border-b-[#1a1a1a] bg-[#323335]" aria-label="Track ${t.num}">
  <div class="ml-0.5 w-[7px] border-r border-[#5a5b5c] bg-[#2a2b2c]"></div>
  <div class="flex w-[63px] flex-col pl-[3px]">
    <div class="flex h-[22px] items-center justify-between pr-[7px] pl-[13px] text-[12px] text-[#dcdedf]">${t.num}${icon(t.icon, t.small)}</div>
    <div class="mt-[5px] ml-[23px] flex h-[30px] w-[30px] items-center justify-center bg-[#2a2a2a] text-white">${icon(t.icon, t.large)}</div>
    <div class="mt-[18px] flex gap-1">${btn('Take lanes', icon('i-takes', 'h-3 w-3.5'))}${btn('Automation lanes', icon('i-auto', 'h-3.5 w-4'))}</div>
  </div>
  <div class="grid grid-cols-[92px_92px] content-start gap-x-[5px] gap-y-1 pt-px">
    <input aria-label="Track name" value="${t.name}" class="ml-px h-[18px] w-[90px] self-center rounded-xs px-0.5 text-[11px] font-bold ${t.nameCls}">
    <div class="flex gap-1">${B.M + B.S + B.rec + B.echo}</div>
    ${sel('Edit filter', '', 'Clips')}
    <div class="flex gap-1">${B.R + B.W + btn('Freeze', icon('i-freeze', 'h-3 w-3'), t.freeze) + B.A}</div>
    <div class="relative">${sel('Input', 'I', t.input, 'h-[18px]')}${t.focus ? '<svg class="pointer-events-none absolute -top-px -left-px h-5 w-[94px]" viewBox="0 0 94 20"><path d="M.5 4V.5H4M90 .5h3.500V4M93.500 16v3.500H90M4 19.500H.5V16" fill="none" stroke="#fff"/></svg>' : ''}</div>
    ${sel('Output', 'O', t.output, 'h-[18px]')}
  </div>
  <div class="ml-[4px] w-[94px] pt-1">
    <button aria-label="Collapse" class="mr-0.5 ml-auto block text-[#b4b7b8]">${icon('i-upup', 'block h-2.5 w-2')}</button>
    <div class="mt-2.5 h-[70px] rounded-t-sm border border-[#222324] bg-[#2b2c2d]"><div class="flex h-4 items-center gap-1 bg-[#222324] px-0.5 text-[#dcdedf]"><span class="text-[#d98b45]">${icon('i-power', 'h-3 w-3')}</span>FX<span class="ml-auto text-[#7d8586]">${icon('i-plus', 'h-2.5 w-2.5')}</span></div></div>
  </div>
  <div class="mt-[3px] ml-[5px] h-[91px] w-3 bg-[#29292a]"></div>
  <div class="flex flex-1 flex-col items-end pt-3 pr-[7px] font-['Liberation_Sans',sans-serif] text-[9px] leading-[8px] text-[#85888a]">${t.meter.map(m => `<span>${m}</span>`).join('')}</div>
</article>`;

el('tracks').innerHTML =
  track({ num: 1, name: 'Audio', icon: 'i-audio', small: 'h-4 w-4', large: 'h-6 w-6', nameCls: 'bg-[#e6bd7e] text-[#222]', freeze: 'bg-[#4e5152] text-[#dcdedf]', input: '-None-', output: 'Master', focus: true, meter: ['-6', '-12', '-18', '-24', '-30', '-36', '-42', '-48', '-54'] }) +
  track({ num: 2, name: 'MIDI', icon: 'i-midi', small: 'h-3.5 w-3.5', large: 'h-[18px] w-[18px]', nameCls: 'bg-[#252627] text-[#e2f4fb]', freeze: 'bg-[#424546] text-[#6c6f70]', input: 'None', output: '1-', meter: [] });

// ruler: four beats to a bar, as many as the pane is wide
const beat = 45.1;
function drawRuler() {
  const width = el('ruler').clientWidth;
  let ticks = '';
  for (let i = 0; i * beat < width - 12; i++) {
    const x = Math.round(i * beat), bar = i % 4 === 0;
    ticks += `<span class="absolute bottom-0 w-px bg-[#8b8e8d] ${bar ? 'h-[11px]' : 'h-1'}" style="left:${x + 1}px"></span>`;
    if (bar) ticks += `<span class="absolute bottom-0 leading-3" style="left:${x + 3}px">${i / 4 + 1}</span>`;
  }
  el('ruler').innerHTML = ticks;
}
new ResizeObserver(drawRuler).observe(el('ruler'));

el('tree').innerHTML = ['Channel Strip', 'Delay', 'Distortion', 'Dynamics', 'EQ', 'Filter', 'Guitar', 'Modulation', 'Reverb', 'Spatial + Panner', 'Surround', 'FX Chain', 'External Insert']
  .map((t, i, all) => {
    const last = i === all.length - 1;
    const twig = last
      ? '<svg class="h-[18px] w-[15px]" viewBox="0 0 15 18"><path d="M4.500 0v10.500H15" fill="none" stroke="#777" stroke-dasharray="1 1"/></svg>'
      : '<svg class="h-[18px] w-[15px]" viewBox="0 0 15 18"><path d="M4.500 0v18M9 10.500h6" stroke="#777" stroke-dasharray="1 1"/><path d="M.5 6.500h8v8h-8z" fill="#fff" stroke="#999"/><path d="M2.500 10.500h4M4.500 8.500v4" stroke="#33508c"/></svg>';
    const pic = last
      ? '<svg class="h-4 w-4" viewBox="0 0 16 16"><path d="M.5.500h15v15H.5z" fill="#262626" stroke="#444"/><path d="M4 2l3 2h2l3-2M4 6l3-2h2l3 2M3.500 14V9.500H7M3.500 12H6M9 9.500l4 4.500M13 9.500L9 14" fill="none" stroke="#ddd" stroke-width="1.200"/></svg>'
      : icon('i-folder', 'h-3.5 w-4 text-[#cfcfcf]');
    return `<li class="flex h-[18px] items-center pl-[7px]">${twig}${pic}<span class="ml-[5px]">${t}</span></li>`;
  }).join('');
</script>
</body>
</html>
